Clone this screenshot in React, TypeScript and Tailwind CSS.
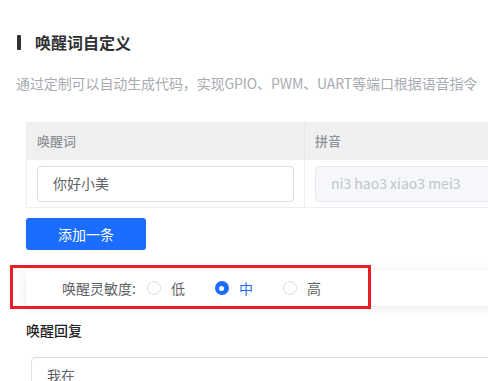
const FONT = { fontFamily: '"Noto Sans CJK SC", "Noto Sans", sans-serif' };

type Opt = { label: string; checked?: boolean };

const options: Opt[] = [{ label: "低" }, { label: "中", checked: true }, { label: "高" }];

function Radio({ label, checked }: Opt) {
  return (
    <label className="flex items-center gap-[10px] mr-[30px]">
      {checked ? (
        <span className="w-[14px] h-[14px] rounded-full bg-[#1a6dff] flex items-center justify-center">
          <span className="w-[5px] h-[5px] rounded-full bg-white" />
        </span>
      ) : (
        <span className="w-[14px] h-[14px] rounded-full border border-[#dcdfe6] bg-white" />
      )}
      <span className={`text-[14px] ${checked ? "text-[#1a6dff]" : "text-[#606266]"}`}>{label}</span>
    </label>
  );
}

export default function App() {
  return (
    <div className="relative w-[488px] h-[381px] overflow-hidden bg-white" style={FONT}>
      {/* 标题 */}
      <div className="flex items-center h-[28px] mt-[28px] pl-[17px]">
        <span className="w-[4px] h-[15px] bg-[#303133] rounded-[1px]" />
        <h2 className="ml-[14px] text-[16px] font-bold text-[#303133] leading-[28px]">唤醒词自定义</h2>
      </div>
      <p className="mt-[16px] pl-[16px] text-[14px] leading-[22px] text-[#a8abb2] whitespace-nowrap tracking-[-0.1px]">
        通过定制可以自动生成代码，实现GPIO、PWM、UART等端口根据语音指令
      </p>

      <div className="pl-[26px]">
        {/* 表格 */}
        <div className="mt-[28px] w-[600px] border border-[#ebeef5]">
          <div className="flex h-[36px] bg-[#f0f0f0] text-[13px] font-medium text-[#909399]">
            <div className="w-[278px] flex items-center px-[10px] border-r border-[#e6e8ee]">唤醒词</div>
            <div className="flex-1 flex items-center px-[10px]">拼音</div>
          </div>
          <div className="flex h-[48px] border-t border-[#ebeef5]">
            <div className="w-[278px] flex items-center px-[10px] border-r border-[#ebeef5]">
              <div className="w-full h-[36px] border border-[#dcdfe6] rounded-[4px] flex items-center px-[15px] text-[14px] text-[#606266]">
                你好小美
              </div>
            </div>
            <div className="flex-1 flex items-center px-[10px]">
              <div className="w-full h-[36px] border border-[#e4e7ed] bg-[#f5f7fa] rounded-[4px] flex items-center px-[15px] text-[14px] text-[#c0c4cc]">
                ni3 hao3 xiao3 mei3
              </div>
            </div>
          </div>
        </div>

        <button className="mt-[10px] w-[120px] h-[32px] rounded-[3px] bg-[#1a6dff] text-white text-[14px]">
          添加一条
        </button>

        {/* 灵敏度 */}
        <div className="mt-[20px] h-[36px] w-[520px] bg-white shadow-[0_2px_12px_rgba(0,0,0,0.09)] flex items-center pl-[36px]">
          <span className="text-[14px] text-[#606266] mr-[11px]">唤醒灵敏度:</span>
          {options.map((o) => (
            <Radio key={o.label} {...o} />
          ))}
        </div>

        <div className="mt-[14px] text-[14px] leading-[20px] text-[#1f1f1f] font-medium">唤醒回复</div>
        <div className="mt-[17px] ml-[5px] w-[500px] h-[36px] border border-[#dcdfe6] rounded-[4px] flex items-center px-[15px] text-[14px] text-[#606266]">
          我在
        </div>
      </div>

      {/* 标注框 */}
      <div className="absolute left-[10px] top-[265px] w-[361px] h-[44px] border-[3px] border-[#ee1c25]" />
    </div>
  );
}
